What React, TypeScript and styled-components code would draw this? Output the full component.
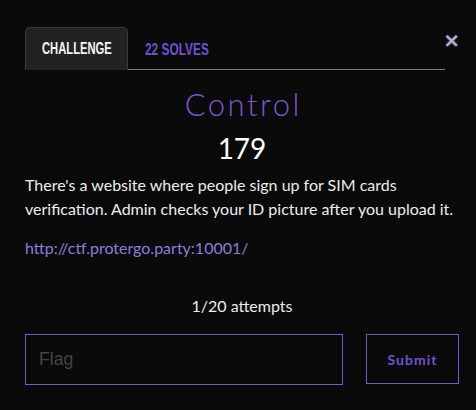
import React from "react";
import styled, { createGlobalStyle } from "styled-components";

const Global = createGlobalStyle`
  html, body { margin: 0; padding: 0; background: #0a0a0a; }
  body { font-family: "Lato", "Liberation Sans", sans-serif; color: #ececec; }
  * { box-sizing: border-box; }
`;

const Modal = styled.div`
  position: relative;
  width: 476px;
  height: 410px;
  padding: 27px 17px 0 25px;
  background: #0a0a0a;
`;

const Close = styled.button`
  position: absolute;
  top: 27px;
  right: 16px;
  border: 0;
  background: transparent;
  padding: 0;
  color: #b4b4bc;
  font-family: "DejaVu Sans", sans-serif;
  font-weight: bold;
  font-size: 20px;
  line-height: 26px;
  text-shadow: 0 0 2px #6a4fd0;
  cursor: pointer;
`;

const TabList = styled.div`
  display: flex;
  align-items: flex-end;
  width: 420px;
  border-bottom: 1px solid #7a7a7a;
  height: 43px;
`;

const Tab = styled.div<{ $active?: boolean; $width?: number }>`
  height: 43px;
  width: ${(p) => (p.$width ? `${p.$width}px` : "auto")};
  margin-bottom: -1px;
  padding: 0 0 0 16px;
  display: flex;
  align-items: center;
  color: ${(p) => (p.$active ? "#f4f4f4" : "#7150d2")};
  background: ${(p) => (p.$active ? "#222222" : "transparent")};
  border: 1px solid ${(p) => (p.$active ? "#3a3a3a" : "transparent")};
  border-bottom: ${(p) => (p.$active ? "1px solid #222222" : "0")};
  border-radius: 5px 5px 0 0;
`;

const TabLabel = styled.span<{ $scale: number }>`
  display: inline-block;
  white-space: nowrap;
  font-family: "Liberation Sans", sans-serif;
  font-weight: bold;
  font-size: 16.5px;
  transform: scaleX(${(p) => p.$scale});
  transform-origin: left center;
`;

const Title = styled.h2`
  margin: 14px 0 0;
  padding-left: 2.5px;
  text-align: center;
  font-family: "Lato", sans-serif;
  font-weight: 300;
  font-size: 31px;
  letter-spacing: 2.5px;
  line-height: 40px;
  color: #7a57cc;
`;

const Points = styled.h4`
  margin: 7px 0 0;
  text-align: center;
  font-weight: 400;
  font-size: 28px;
  line-height: 34px;
  color: #ffffff;
`;

const Description = styled.p`
  margin: 8px 0 0;
  font-size: 16px;
  line-height: 24px;
  color: #ececec;
`;

const Link = styled.a`
  display: block;
  margin-top: 15px;
  font-size: 16px;
  line-height: 24px;
  color: #8a7ddc;
  text-decoration: none;
`;

const Attempts = styled.p`
  margin: 34px 0 0;
  text-align: center;
  font-size: 16px;
  line-height: 24px;
  color: #ececec;
`;

const FormRow = styled.form`
  display: flex;
  gap: 23px;
  margin-top: 16px;
  width: 434px;
  align-items: flex-start;
`;

const FlagInput = styled.input`
  width: 318px;
  height: 51px;
  padding: 0 13px;
  background: transparent;
  border: 1px solid #7a55cc;
  color: #eee;
  font-family: "Liberation Sans", sans-serif;
  font-size: 17.6px;
  outline: none;
  &::placeholder { color: #454545; }
`;

const SubmitButton = styled.button`
  width: 93px;
  height: 50px;
  background: transparent;
  border: 1px solid #7a55cc;
  color: #7150d2;
  font-family: "Lato", sans-serif;
  font-weight: bold;
  font-size: 14px;
  letter-spacing: 1px;
  cursor: pointer;
`;

export default function App() {
  return (
    <>
      <Global />
      <Modal>
        <Close aria-label="Close">×</Close>
        <TabList>
          <Tab $active $width={103}>
            <TabLabel $scale={0.68}>CHALLENGE</TabLabel>
          </Tab>
          <Tab>
            <TabLabel $scale={0.72}>22 SOLVES</TabLabel>
          </Tab>
        </TabList>
        <Title>Control</Title>
        <Points>179</Points>
        <Description>
          There's a website where people sign up for SIM cards verification. Admin checks your ID picture after you upload it.
        </Description>
        <Link href="#">http://ctf.protergo.party:10001/</Link>
        <Attempts>1/20 attempts</Attempts>
        <FormRow onSubmit={(e) => e.preventDefault()}>
          <FlagInput placeholder="Flag" />
          <SubmitButton type="submit">Submit</SubmitButton>
        </FormRow>
      </Modal>
    </>
  );
}
